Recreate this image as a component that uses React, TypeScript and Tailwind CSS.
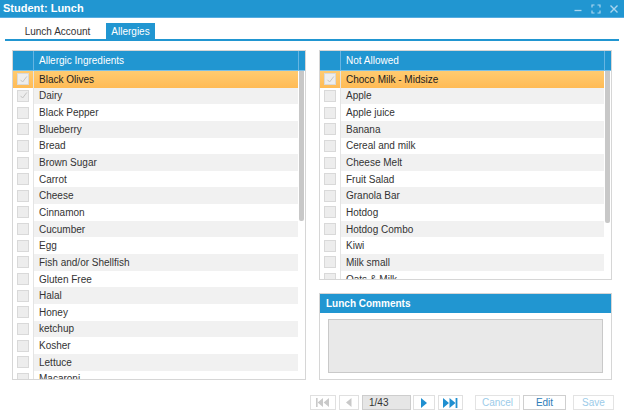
import { Fragment } from "react";

const BLUE = "bg-[#2196d1]";

const allergic = [
  "Black Olives",
  "Dairy",
  "Black Pepper",
  "Blueberry",
  "Bread",
  "Brown Sugar",
  "Carrot",
  "Cheese",
  "Cinnamon",
  "Cucumber",
  "Egg",
  "Fish and/or Shellfish",
  "Gluten Free",
  "Halal",
  "Honey",
  "ketchup",
  "Kosher",
  "Lettuce",
  "Macaroni",
];

const notAllowed = [
  "Choco Milk - Midsize",
  "Apple",
  "Apple juice",
  "Banana",
  "Cereal and milk",
  "Cheese Melt",
  "Fruit Salad",
  "Granola Bar",
  "Hotdog",
  "Hotdog Combo",
  "Kiwi",
  "Milk small",
  "Oats & Milk",
];

function Check({ checked }: { checked: boolean }) {
  return (
    <span className="flex h-[12px] w-[12px] items-center justify-center border border-[#d9d9d9] bg-[#ededed]">
      {checked && (
        <svg width="9" height="9" viewBox="0 0 9 9">
          <path d="M1.5 4.8 L3.6 7 L7.8 1.5" fill="none" stroke="#c4c4c4" strokeWidth="1" />
        </svg>
      )}
    </span>
  );
}

function Row({ label, index, checked }: { label: string; index: number; checked: boolean }) {
  const selected = index === 0;
  return (
    <div
      className={
        "flex h-[16.65px] shrink-0 items-center " +
        (selected ? "bg-gradient-to-b from-[#ffcb70] to-[#ffbb55]" : "")
      }
    >
      <div className="flex h-full w-[21px] shrink-0 items-center justify-center border-r border-[#e4e4e4]">
        <Check checked={checked} />
      </div>
      <div
        className={
          "flex h-full flex-1 items-center whitespace-nowrap pl-[5px] text-[10px] " +
          (selected ? "text-[#222]" : index % 2 === 1 ? "bg-[#f1f1f1] text-[#333]" : "text-[#333]")
        }
      >
        {label}
      </div>
    </div>
  );
}

function GridPanel({
  title,
  items,
  checkedCount,
  height,
  thumb,
}: {
  title: string;
  items: string[];
  checkedCount: number;
  height: string;
  thumb: string;
}) {
  return (
    <div className={"flex flex-col border border-[#d6d6d6] bg-white " + height}>
      <div className={"flex h-[20px] shrink-0 border-b border-[#7cc0e6] " + BLUE}>
        <div className="w-[21px] shrink-0 border-r border-[#66b5e2]" />
        <div className="flex flex-1 items-center pl-[5px] text-[10px] text-white">{title}</div>
        <div className="w-[7px] shrink-0 border-l border-[#66b5e2]" />
      </div>
      <div className="flex min-h-0 flex-1">
        <div className="flex min-w-0 flex-1 flex-col overflow-hidden">
          {items.map((it, i) => (
            <Row key={it} label={it} index={i} checked={i < checkedCount} />
          ))}
        </div>
        <div className="w-[7px] shrink-0 pl-[1px]">
          <div className={"w-[5px] rounded-b-[2px] bg-[#c8c8c8] " + thumb} />
        </div>
      </div>
    </div>
  );
}

function PagerButton({ children, w }: { children: React.ReactNode; w: string }) {
  return (
    <div className={"flex h-[15px] items-center justify-center border border-[#e0e0e0] bg-white " + w}>
      {children}
    </div>
  );
}

export default function App() {
  return (
    <div className="relative h-[415px] w-[624px] overflow-hidden bg-white font-['Liberation_Sans_Narrow','Arial_Narrow',sans-serif]">
      {/* window title */}
      <div className={"flex h-[18px] items-center justify-between border-b border-[#58ace0] pl-[3px] pr-[5px] " + BLUE}>
        <span className="text-[11px] font-bold text-white">Student: Lunch</span>
        <div className="flex items-center gap-[8px]">
          <svg width="10" height="10" viewBox="0 0 10 10">
            <path d="M1.5 6.5 H8.5" stroke="#a9d5ef" strokeWidth="1.3" />
          </svg>
          <svg width="10" height="10" viewBox="0 0 10 10">
            <path
              d="M1 3.5 V1 H3.5 M6.5 1 H9 V3.5 M9 6.5 V9 H6.5 M3.5 9 H1 V6.5"
              fill="none"
              stroke="#a9d5ef"
              strokeWidth="1.2"
            />
          </svg>
          <svg width="10" height="10" viewBox="0 0 10 10">
            <path d="M1.5 1.5 L8.5 8.5 M8.5 1.5 L1.5 8.5" stroke="#a9d5ef" strokeWidth="1.4" />
          </svg>
        </div>
      </div>

      {/* tabs */}
      <div className="mx-[5px] mt-[5px] flex h-[18px] items-stretch border-b-2 border-[#2196d1] pl-[10px]">
        <div className="flex w-[85px] items-center justify-center text-[10px] text-[#333]">Lunch Account</div>
        <div className={"ml-[6px] flex w-[49px] items-center justify-center text-[10px] text-white " + BLUE}>
          Allergies
        </div>
      </div>

      {/* panels */}
      <div className="mt-[9px] flex">
        <div className="ml-[12px] w-[294px]">
          <GridPanel
            title="Allergic Ingredients"
            items={allergic}
            checkedCount={2}
            height="h-[330px]"
            thumb="h-[150px]"
          />
        </div>
        <div className="ml-[13px] flex w-[293px] flex-col">
          <GridPanel
            title="Not Allowed"
            items={notAllowed}
            checkedCount={1}
            height="h-[230px]"
            thumb="h-[152px]"
          />
          <div className="mt-[13px] flex h-[87px] flex-col border border-[#d6d6d6]">
            <div className={"flex h-[19px] shrink-0 items-center pl-[6px] text-[10px] font-bold text-white " + BLUE}>
              Lunch Comments
            </div>
            <div className="mx-[8px] mb-[6px] mt-[6px] flex-1 border border-[#c9c9c9] bg-[#e9e9e9]" />
          </div>
        </div>
      </div>

      {/* pager + actions */}
      <div className="mt-[15px] flex items-center justify-end pr-[10px]">
        <PagerButton w="w-[26px]">
          <svg width="18" height="9" viewBox="0 0 18 9">
            <rect x="2" y="0" width="1.6" height="9" fill="#c9c9c9" />
            <path d="M9 0 L3.6 4.5 L9 9 Z M15 0 L9.6 4.5 L15 9 Z" fill="#c9c9c9" />
          </svg>
        </PagerButton>
        <div className="w-[3px]" />
        <PagerButton w="w-[20px]">
          <svg width="8" height="9" viewBox="0 0 8 9">
            <path d="M6.5 0 L1 4.5 L6.5 9 Z" fill="#c9c9c9" />
          </svg>
        </PagerButton>
        <div className="w-[3px]" />
        <div className="flex h-[15px] w-[49px] items-center border border-[#cdcdcd] bg-[#e6e6e6] pl-[6px] text-[10px] text-[#333]">
          1/43
        </div>
        <div className="w-[2px]" />
        <PagerButton w="w-[22px]">
          <svg width="8" height="10" viewBox="0 0 8 10">
            <path d="M1 0 L7 5 L1 10 Z" fill="#1f8fd0" />
          </svg>
        </PagerButton>
        <div className="w-[3px]" />
        <PagerButton w="w-[25px]">
          <svg width="17" height="10" viewBox="0 0 17 10">
            <path d="M1 0 L7 5 L1 10 Z M7.5 0 L13.5 5 L7.5 10 Z" fill="#1f8fd0" />
            <rect x="13.6" y="0" width="1.8" height="10" fill="#1f8fd0" />
          </svg>
        </PagerButton>
        <div className="w-[12px]" />
        {[
          { t: "Cancel", w: "w-[45px]", c: "text-[#9ccbe9]", b: "border-[#e3e3e3]" },
          { t: "Edit", w: "w-[43px]", c: "text-[#2e7db8]", b: "border-[#cfcfcf]" },
          { t: "Save", w: "w-[41px]", c: "text-[#9ccbe9]", b: "border-[#e3e3e3]" },
        ].map((b, i) => (
          <Fragment key={b.t}>
            {i > 0 && <div className={i === 1 ? "w-[3px]" : "w-[7px]"} />}
            <div className={"flex h-[15px] items-center justify-center border bg-white text-[10px] " + b.w + " " + b.c + " " + b.b}>
              {b.t}
            </div>
          </Fragment>
        ))}
      </div>
    </div>
  );
}
